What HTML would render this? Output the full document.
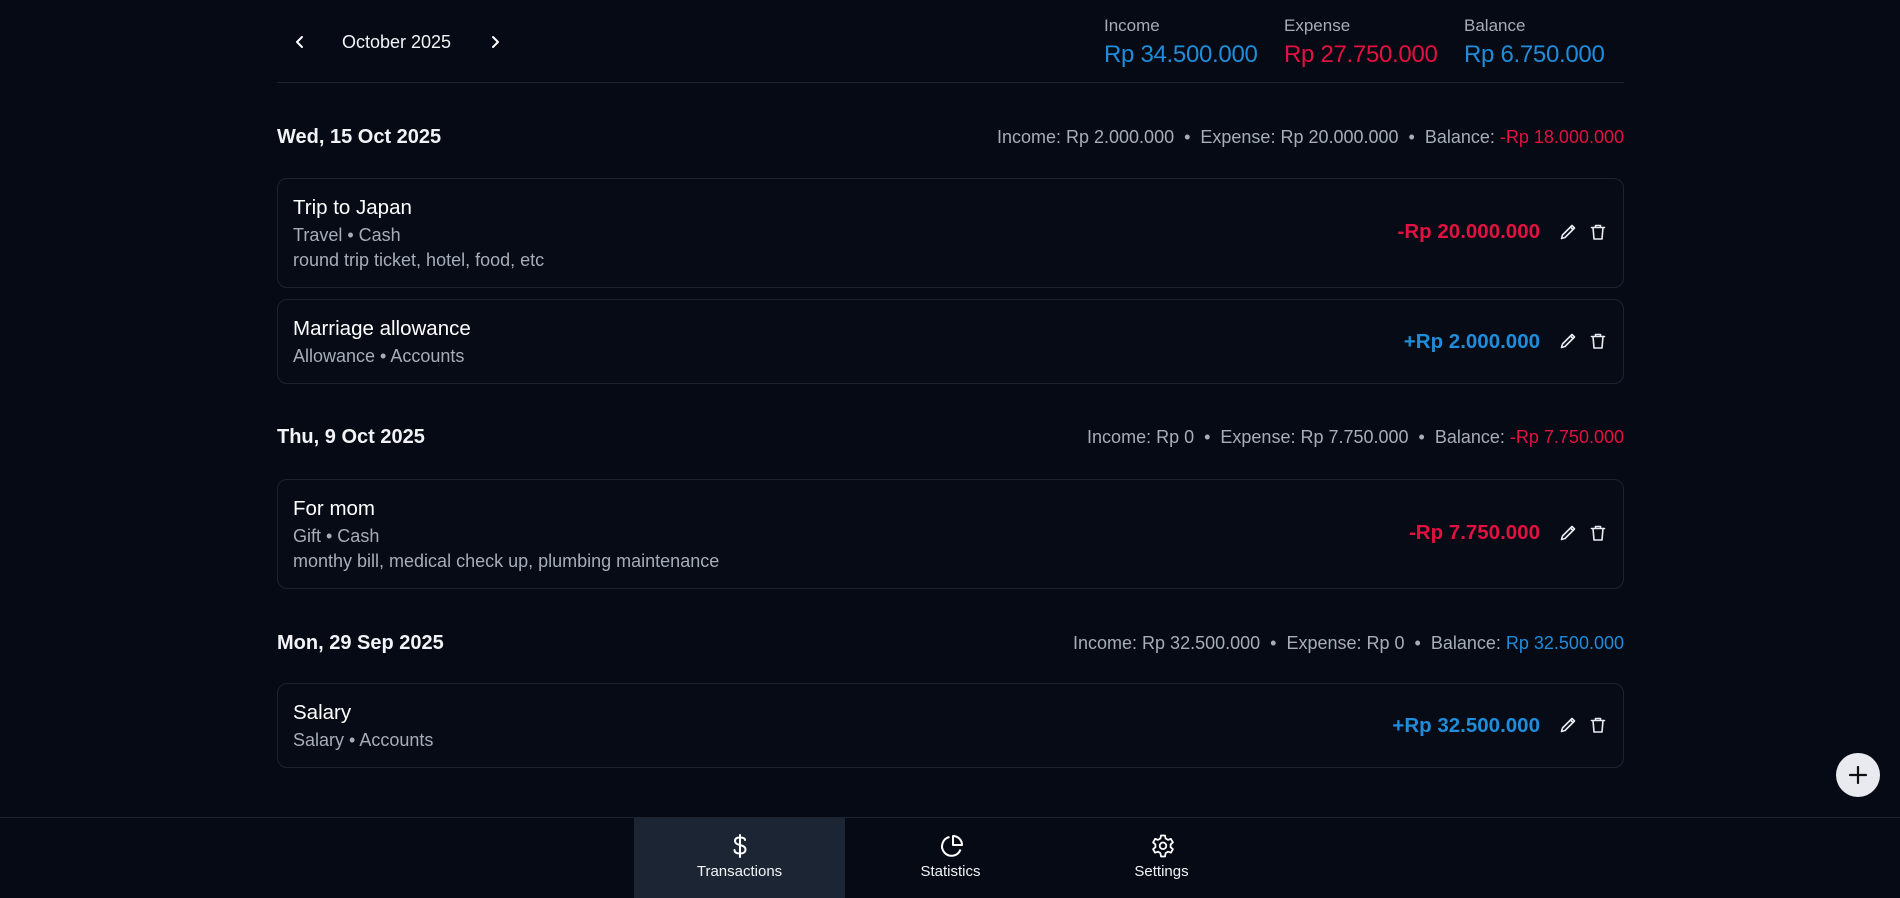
<!DOCTYPE html>
<html><head><meta charset="utf-8"><style>
*{box-sizing:border-box;margin:0;padding:0}
body{width:1900px;height:897px;background:#050a14;font-family:"Liberation Sans",sans-serif;color:#f1f3f6;position:relative;overflow:hidden}
.abs{position:absolute}
.blue{color:#1f8ddb}.red{color:#e3113f}
.lbl{font-size:17px;color:#a7adb8}
.val{font-size:24px;font-weight:500;letter-spacing:-0.3px}
.date{position:absolute;left:277px;font-size:20px;font-weight:bold}
.sum{position:absolute;right:276px;font-size:18px;color:#a7adb8}
.card{position:absolute;left:277px;width:1347px;border:1px solid #1c2330;border-radius:10px;background:#060b16}
.t{position:absolute;left:15px;font-size:20.5px;font-weight:500;color:#fff}
.s{position:absolute;left:15px;font-size:18px;color:#a7adb8}
.amt{position:absolute;right:83px;font-size:20.5px;font-weight:bold}
.ic{position:absolute;width:20px;height:20px}
.nav{position:absolute;top:817px;left:0;width:1900px;height:80px;border-top:1px solid #1c2330;background:#050a14}
.tab{position:absolute;top:0;width:211px;height:80px;text-align:center;font-size:15px;font-weight:500}
.tab svg{position:absolute;left:94px;top:15px}
.tab span{position:absolute;left:0;right:0;top:45px}
</style></head><body>
<svg class="abs" style="left:293px;top:34px" width="14" height="16" viewBox="0 0 14 16"><path d="M9 3 L4 8 L9 13" fill="none" stroke="#fff" stroke-width="2" stroke-linecap="round" stroke-linejoin="round"/></svg>
<div class="abs" style="left:342px;top:32px;font-size:18px;font-weight:500">October 2025</div>
<svg class="abs" style="left:488px;top:34px" width="14" height="16" viewBox="0 0 14 16"><path d="M5 3 L10 8 L5 13" fill="none" stroke="#fff" stroke-width="2" stroke-linecap="round" stroke-linejoin="round"/></svg>

<div class="abs lbl" style="left:1104px;top:16px">Income</div>
<div class="abs val blue" style="left:1104px;top:41px">Rp 34.500.000</div>
<div class="abs lbl" style="left:1284px;top:16px">Expense</div>
<div class="abs val red" style="left:1284px;top:41px">Rp 27.750.000</div>
<div class="abs lbl" style="left:1464px;top:16px">Balance</div>
<div class="abs val blue" style="left:1464px;top:41px">Rp 6.750.000</div>
<div class="abs" style="left:277px;top:82px;width:1347px;height:1px;background:#1c2330"></div>

<div class="date" style="top:126px">Wed, 15 Oct 2025</div>
<div class="sum" style="top:127px">Income: Rp 2.000.000 &nbsp;•&nbsp; Expense: Rp 20.000.000 &nbsp;•&nbsp; Balance: <span class="red">-Rp 18.000.000</span></div>

<div class="card" style="top:178px;height:110px">
<div class="t" style="top:17px">Trip to Japan</div>
<div class="s" style="top:46px">Travel • Cash</div>
<div class="s" style="top:71px">round trip ticket, hotel, food, etc</div>
<div class="amt red" style="top:41px">-Rp 20.000.000</div>
</div>
<div class="card" style="top:299px;height:85px">
<div class="t" style="top:17px">Marriage allowance</div>
<div class="s" style="top:46px">Allowance • Accounts</div>
<div class="amt blue" style="top:30px">+Rp 2.000.000</div>
</div>

<div class="date" style="top:426px">Thu, 9 Oct 2025</div>
<div class="sum" style="top:427px">Income: Rp 0 &nbsp;•&nbsp; Expense: Rp 7.750.000 &nbsp;•&nbsp; Balance: <span class="red">-Rp 7.750.000</span></div>
<div class="card" style="top:479px;height:110px">
<div class="t" style="top:17px">For mom</div>
<div class="s" style="top:46px">Gift • Cash</div>
<div class="s" style="top:71px">monthy bill, medical check up, plumbing maintenance</div>
<div class="amt red" style="top:41px">-Rp 7.750.000</div>
</div>

<div class="date" style="top:632px">Mon, 29 Sep 2025</div>
<div class="sum" style="top:633px">Income: Rp 32.500.000 &nbsp;•&nbsp; Expense: Rp 0 &nbsp;•&nbsp; Balance: <span class="blue">Rp 32.500.000</span></div>
<div class="card" style="top:683px;height:85px">
<div class="t" style="top:17px">Salary</div>
<div class="s" style="top:46px">Salary • Accounts</div>
<div class="amt blue" style="top:30px">+Rp 32.500.000</div>
</div>

<svg style="display:none"><defs>
<g id="pen"><path d="M14 3.5 L16.5 6 L7 15.5 L3.5 16.5 L4.5 13 Z M12.5 5 L15 7.5" fill="none" stroke="#e8eaee" stroke-width="1.6" stroke-linejoin="round"/></g>
<g id="bin"><path d="M3.5 5.5 H16.5 M7.5 5.5 V3.5 H12.5 V5.5 M5 5.5 L6 17 H14 L15 5.5" fill="none" stroke="#e8eaee" stroke-width="1.6" stroke-linejoin="round" stroke-linecap="round"/></g>
</defs></svg>
<svg class="ic" style="left:1558px;top:222px" viewBox="0 0 20 20"><use href="#pen"/></svg>
<svg class="ic" style="left:1588px;top:222px" viewBox="0 0 20 20"><use href="#bin"/></svg>
<svg class="ic" style="left:1558px;top:331px" viewBox="0 0 20 20"><use href="#pen"/></svg>
<svg class="ic" style="left:1588px;top:331px" viewBox="0 0 20 20"><use href="#bin"/></svg>
<svg class="ic" style="left:1558px;top:523px" viewBox="0 0 20 20"><use href="#pen"/></svg>
<svg class="ic" style="left:1588px;top:523px" viewBox="0 0 20 20"><use href="#bin"/></svg>
<svg class="ic" style="left:1558px;top:715px" viewBox="0 0 20 20"><use href="#pen"/></svg>
<svg class="ic" style="left:1588px;top:715px" viewBox="0 0 20 20"><use href="#bin"/></svg>

<div class="abs" style="left:1836px;top:753px;width:44px;height:44px;border-radius:50%;background:#e8eaef"></div>
<svg class="abs" style="left:1846px;top:763px" width="24" height="24" viewBox="0 0 24 24"><path d="M12 4 V20 M4 12 H20" stroke="#111" stroke-width="2.2" stroke-linecap="round"/></svg>

<div class="nav">
<div class="tab" style="left:634px;background:#1c2533">
<svg width="24" height="26" viewBox="0 0 24 26"><path d="M12 2 V24 M17 7 C17 5 15 4.5 12 4.5 C8.5 4.5 7 6 7 8 C7 10.5 9.5 11.5 12 12 C15 12.6 17.5 13.5 17.5 16.5 C17.5 19 15.5 20.5 12 20.5 C9 20.5 6.5 19.5 6.5 17" fill="none" stroke="#fff" stroke-width="2" stroke-linecap="round"/></svg>
<span>Transactions</span></div>
<div class="tab" style="left:845px">
<svg width="26" height="26" viewBox="0 0 26 26"><path d="M21.5 16.5 A9.5 9.5 0 1 1 10.5 4 M14 3 A9 9 0 0 1 23 12 H14 Z" fill="none" stroke="#fff" stroke-width="2" stroke-linejoin="round"/></svg>
<span>Statistics</span></div>
<div class="tab" style="left:1056px">
<svg width="26" height="26" viewBox="0 0 26 26"><path d="M11 2.5 H15 L15.6 5.5 L18 6.9 L20.9 5.9 L22.9 9.4 L20.6 11.4 V14.2 L22.9 16.2 L20.9 19.7 L18 18.7 L15.6 20.1 L15 23.5 H11 L10.4 20.1 L8 18.7 L5.1 19.7 L3.1 16.2 L5.4 14.2 V11.4 L3.1 9.4 L5.1 5.9 L8 6.9 L10.4 5.5 Z" fill="none" stroke="#fff" stroke-width="1.8" stroke-linejoin="round"/><circle cx="13" cy="12.8" r="3.3" fill="none" stroke="#fff" stroke-width="1.8"/></svg>
<span>Settings</span></div>
</div>
</body></html>
